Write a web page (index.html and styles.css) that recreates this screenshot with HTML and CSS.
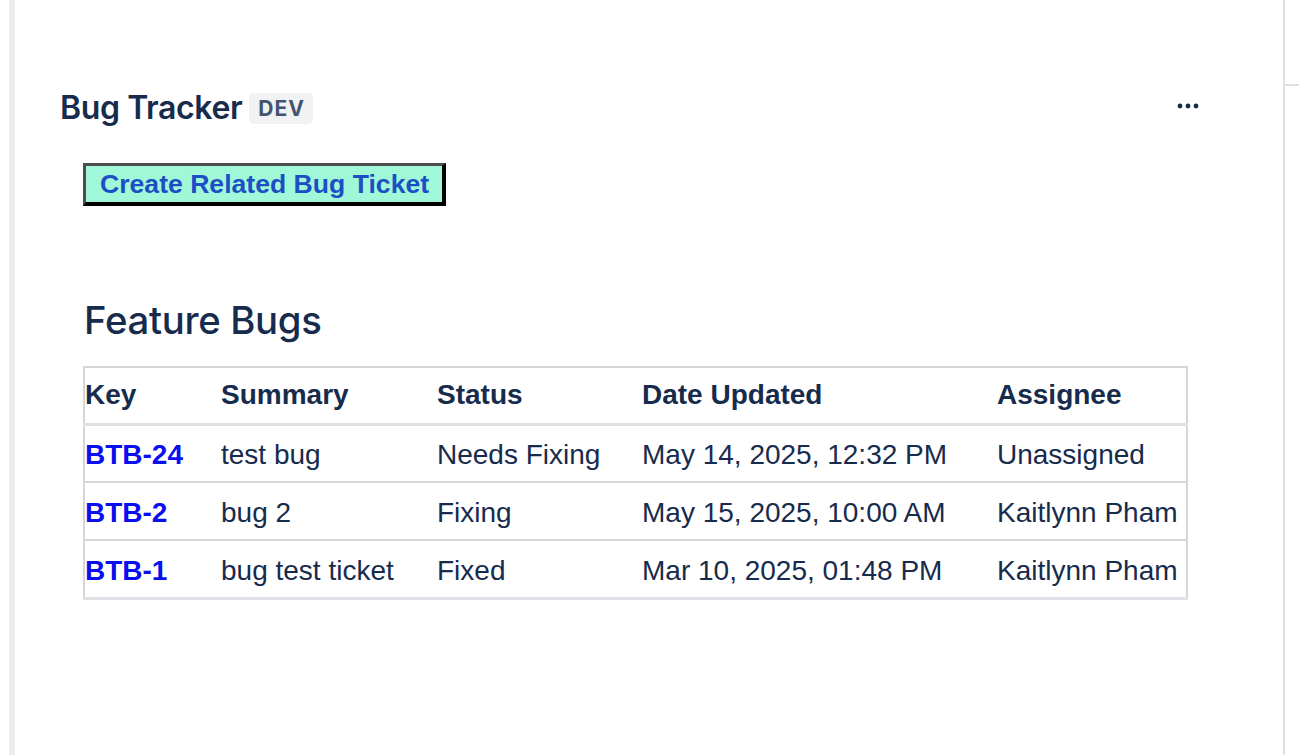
FILE: index.html
```html
<!DOCTYPE html>
<html>
<head>
<meta charset="utf-8">
<link rel="stylesheet" href="styles.css">
</head>
<body>
<div class="page">
  <div class="leftbar"></div>
  <main class="main">
    <header class="app-header">
      <div class="title-wrap">
        <h1 class="title">Bug Tracker</h1>
        <span class="badge">DEV</span>
      </div>
      <button class="more" aria-label="More actions">
        <svg width="24" height="8" viewBox="0 0 24 8"><circle cx="4" cy="4" r="2.4"/><circle cx="12" cy="4" r="2.4"/><circle cx="20" cy="4" r="2.4"/></svg>
      </button>
    </header>
    <section class="content">
      <button class="create-btn">Create Related Bug Ticket</button>
      <h2 class="section-title">Feature Bugs</h2>
      <table class="bugs">
        <colgroup>
          <col class="c-key"><col class="c-sum"><col class="c-status"><col class="c-date"><col class="c-assignee">
        </colgroup>
        <thead>
          <tr><th>Key</th><th>Summary</th><th>Status</th><th>Date Updated</th><th>Assignee</th></tr>
        </thead>
        <tbody>
          <tr><td><a href="#">BTB-24</a></td><td>test bug</td><td>Needs Fixing</td><td>May 14, 2025, 12:32 PM</td><td>Unassigned</td></tr>
          <tr><td><a href="#">BTB-2</a></td><td>bug 2</td><td>Fixing</td><td>May 15, 2025, 10:00 AM</td><td>Kaitlynn Pham</td></tr>
          <tr class="last"><td><a href="#">BTB-1</a></td><td>bug test ticket</td><td>Fixed</td><td>Mar 10, 2025, 01:48 PM</td><td>Kaitlynn Pham</td></tr>
        </tbody>
      </table>
    </section>
  </main>
  <div class="rightrail"><div class="stub"></div></div>
</div>
</body>
</html>
```

FILE: styles.css
```css
* { box-sizing: border-box; }
html, body { margin: 0; padding: 0; background: #fff; }
body { font-family: Inter, "Noto Sans", sans-serif; color: #172b4d; }

.page {
  display: flex;
  height: 755px;
  overflow: hidden;
}
.leftbar {
  margin-left: 9px;
  width: 6px;
  background: #ebecf0;
  flex: none;
}
.main {
  flex: 1;
  padding: 88px 83px 0 45px;
}
.rightrail {
  flex: none;
  width: 16px;
  border-left: 2px solid #dfe1e6;
  padding-top: 84px;
}
.stub {
  height: 2px;
  background: #dfe1e6;
}

.app-header {
  display: flex;
  align-items: center;
  justify-content: space-between;
  height: 40px;
}
.title-wrap { display: flex; align-items: center; gap: 7px; }
.title {
  margin: 0;
  font-size: 32px;
  font-weight: 600;
  letter-spacing: -0.4px;
  line-height: 38px;
}
.badge {
  background: #f1f2f4;
  color: #44546f;
  font-weight: 700;
  font-size: 21px;
  letter-spacing: 1px;
  padding: 0 8px 0 9px;
  height: 31px;
  line-height: 31px;
  border-radius: 5px;
}
.more {
  background: none;
  border: 0;
  padding: 0;
  width: 24px;
  height: 8px;
  display: flex;
  fill: #172b4d;
  margin-top: -4px;
}

.content { padding: 35px 0 0 23px; }

.create-btn {
  display: block;
  font-family: "Liberation Sans", Arial, sans-serif;
  font-weight: 700;
  font-size: 26.6px;
  color: #1d4fc4;
  background: #a1f8d8;
  border-style: solid;
  border-width: 3px 4px 4px 3px;
  border-color: #4d4d4d #000 #000 #4d4d4d;
  padding: 0 13px 0 14px;
  height: 43px;
  line-height: 36px;
  margin-left: 0;
}

.section-title {
  margin: 92px 0 24px 1px;
  font-size: 38.3px;
  font-weight: 500;
  line-height: 44px;
  letter-spacing: -0.3px;
}

.bugs {
  width: 1105px;
  border-collapse: collapse;
  border: 2px solid #d6d6d6;
  font-family: "Liberation Sans", Arial, sans-serif;
  font-size: 28px;
  color: #172b4d;
}
.c-key { width: 137px; }
.c-sum { width: 216px; }
.c-status { width: 205px; }
.c-date { width: 355px; }
.bugs th, .bugs td {
  text-align: left;
  padding: 4px 0 0 0;
  white-space: nowrap;
  height: 58px;
  vertical-align: middle;
}
.bugs th { font-weight: 700; height: 57px; padding-top: 0; }
.bugs thead tr { border-bottom: 3px solid #dfe1e6; }
.bugs tbody tr { border-bottom: 2px solid #d6d6d6; }
.bugs tbody tr.last { border-bottom: 3px solid #dfe1e6; }
.bugs a {
  color: #0a0ff0;
  font-weight: 700;
  text-decoration: none;
}
```
